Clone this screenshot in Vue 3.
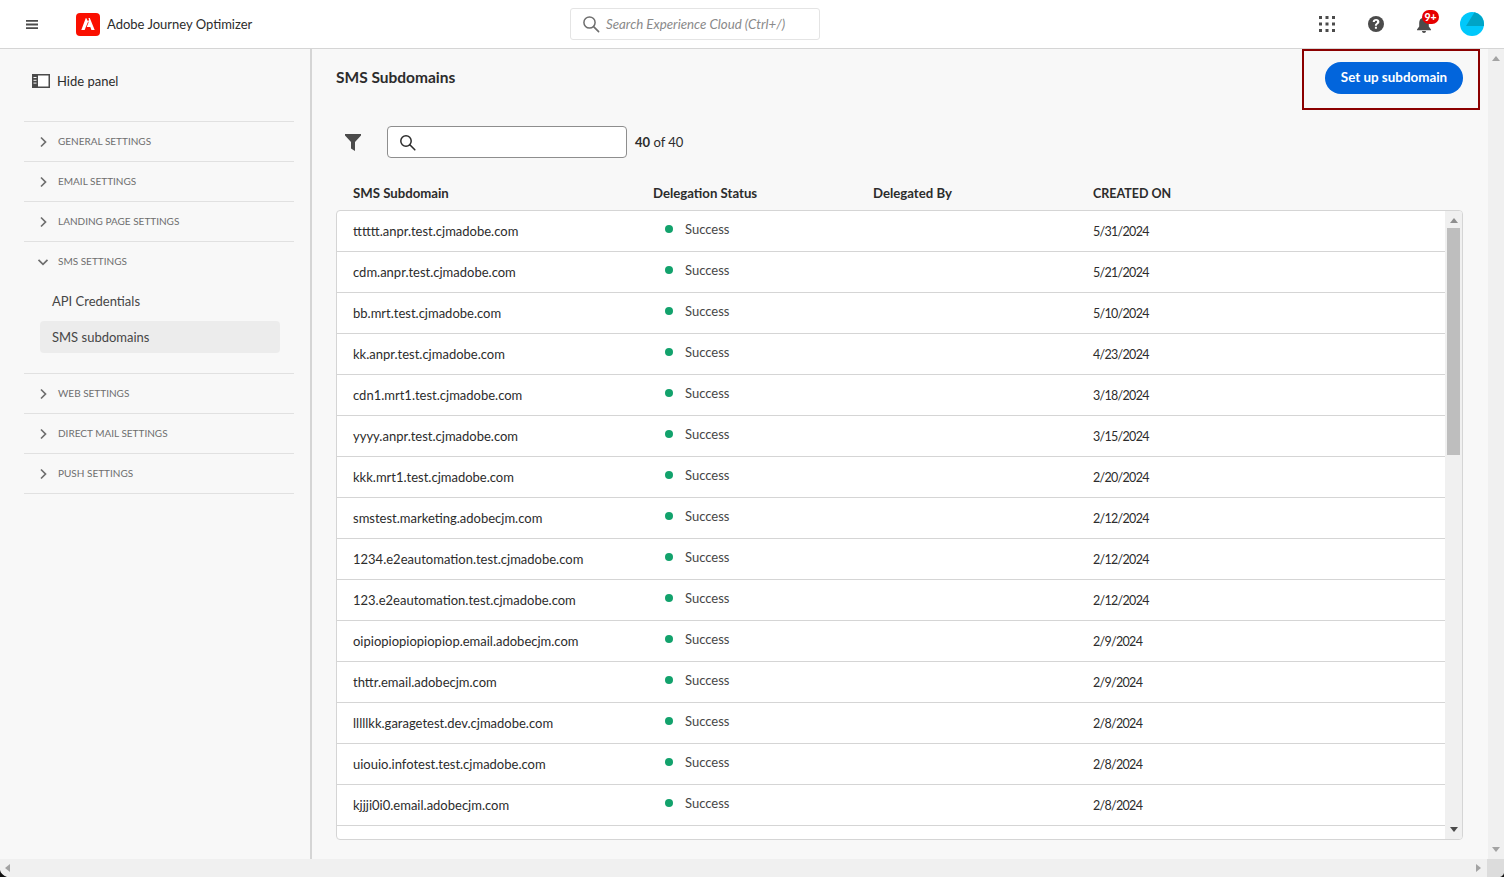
<script setup>
const sections = [
  { name: 'GENERAL SETTINGS' },
  { name: 'EMAIL SETTINGS' },
  { name: 'LANDING PAGE SETTINGS' },
  { name: 'SMS SETTINGS', open: true, items: [{ name: 'API Credentials' }, { name: 'SMS subdomains', active: true }] },
  { name: 'WEB SETTINGS' },
  { name: 'DIRECT MAIL SETTINGS' },
  { name: 'PUSH SETTINGS' },
]
const rows = [
  ['tttttt.anpr.test.cjmadobe.com', '5/31/2024'],
  ['cdm.anpr.test.cjmadobe.com', '5/21/2024'],
  ['bb.mrt.test.cjmadobe.com', '5/10/2024'],
  ['kk.anpr.test.cjmadobe.com', '4/23/2024'],
  ['cdn1.mrt1.test.cjmadobe.com', '3/18/2024'],
  ['yyyy.anpr.test.cjmadobe.com', '3/15/2024'],
  ['kkk.mrt1.test.cjmadobe.com', '2/20/2024'],
  ['smstest.marketing.adobecjm.com', '2/12/2024'],
  ['1234.e2eautomation.test.cjmadobe.com', '2/12/2024'],
  ['123.e2eautomation.test.cjmadobe.com', '2/12/2024'],
  ['oipiopiopiopiopiop.email.adobecjm.com', '2/9/2024'],
  ['thttr.email.adobecjm.com', '2/9/2024'],
  ['lllllkk.garagetest.dev.cjmadobe.com', '2/8/2024'],
  ['uiouio.infotest.test.cjmadobe.com', '2/8/2024'],
  ['kjjji0i0.email.adobecjm.com', '2/8/2024'],
]
</script>

<template>
  <div class="page">
    <header class="topbar">
      <svg class="burger" width="12" height="9" viewBox="0 0 12 9"><path d="M0 0h12v1.8H0zM0 3.6h12v1.8H0zM0 7.2h12V9H0z" fill="#4b4b4b"/></svg>
      <div class="logo">
        <svg width="14" height="12" viewBox="0 0 14 12"><path d="M4.800 0 .3 12h3.300L8 1.500 7.400 0zM5.200 0h3.600L13.700 12h-3.300L9.300 9H5.700l1.900-4.400z" fill="#fff"/></svg>
      </div>
      <span class="brand">Adobe Journey Optimizer</span>
      <div class="globalsearch">
        <svg width="18" height="18" viewBox="0 0 18 18"><circle cx="7.500" cy="7.500" r="5.600" fill="none" stroke="#6e6e6e" stroke-width="1.500"/><path d="m11.600 11.600 5 5" stroke="#6e6e6e" stroke-width="1.600" stroke-linecap="round"/></svg>
        <span>Search Experience Cloud (Ctrl+/)</span>
      </div>
      <div class="topicons">
        <svg width="16" height="16" viewBox="0 0 16 16" fill="#4b4b4b"><rect x="0" y="0" width="3" height="3"/><rect x="6.500" y="0" width="3" height="3"/><rect x="13" y="0" width="3" height="3"/><rect x="0" y="6.500" width="3" height="3"/><rect x="6.500" y="6.500" width="3" height="3"/><rect x="13" y="6.500" width="3" height="3"/><rect x="0" y="13" width="3" height="3"/><rect x="6.500" y="13" width="3" height="3"/><rect x="13" y="13" width="3" height="3"/></svg>
        <svg class="help" width="16" height="16" viewBox="0 0 16 16"><circle cx="8" cy="8" r="8" fill="#4b4b4b"/><path d="M4.700 6C4.800 4 6.100 2.900 8.100 2.900c2 0 3.300 1.100 3.300 2.800 0 1.300-.7 1.900-1.600 2.500-.7.500-.9.800-.9 1.500H6.900c0-1.200.4-1.800 1.200-2.400.7-.5 1-.9 1-1.500 0-.6-.4-1-1-1-.7 0-1.200.4-1.300 1.200z" fill="#fff"/><rect x="6.900" y="10.700" width="2" height="2.100" rx=".4" fill="#fff"/></svg>
        <div class="bellwrap">
          <svg width="14" height="17" viewBox="0 0 14 17"><path d="M7 0c.7 0 1.200.5 1.200 1.200v.6C10.600 2.400 11.800 4.400 11.800 7v3.400L14 13.400v.8H0v-.8l2.200-3V7c0-2.600 1.200-4.600 3.600-5.200v-.6C5.800.5 6.300 0 7 0z" fill="#4b4b4b"/><path d="M5 15h4c0 1.200-.9 2-2 2s-2-.8-2-2z" fill="#4b4b4b"/></svg>
          <span class="badge">9+</span>
        </div>
        <svg class="avatar" width="24" height="24" viewBox="0 0 24 24"><circle cx="12" cy="12" r="12" fill="#00c8fb"/><path d="M14.500.3 6 14h18v-2A12 12 0 0 0 14.500.3z" fill="#00a4c6"/></svg>
      </div>
    </header>

    <div class="middle">
      <aside class="sidebar">
        <div class="hide">
          <svg width="18" height="14" viewBox="0 0 18 14"><rect x=".75" y=".75" width="16.500" height="12.500" fill="#fff" stroke="#4b4b4b" stroke-width="1.500"/><rect x="0" y="0" width="6" height="14" fill="#4b4b4b"/><path d="M1.500 3.500h3M1.500 6.300h3M1.500 9.100h3" stroke="#f8f8f8" stroke-width="1"/></svg>
          <span>Hide panel</span>
        </div>
        <nav class="accordion">
          <div v-for="s in sections" :key="s.name" class="section">
            <div class="sechead">
              <svg v-if="s.open" class="chev" width="12" height="12" viewBox="0 0 12 12"><path d="M1.500 3.800 6 8.300l4.500-4.500" fill="none" stroke="#6e6e6e" stroke-width="1.700"/></svg>
              <svg v-else class="chev" width="12" height="12" viewBox="0 0 12 12"><path d="M4 1.500 8.500 6 4 10.500" fill="none" stroke="#6e6e6e" stroke-width="1.700"/></svg>
              <span>{{ s.name }}</span>
            </div>
            <div v-if="s.open" class="subitems">
              <div v-for="i in s.items" :key="i.name" class="subitem" :class="{ active: i.active }">{{ i.name }}</div>
            </div>
          </div>
        </nav>
      </aside>

      <main class="content">
        <div class="titlebar">
          <h1>SMS Subdomains</h1>
          <button class="cta">Set up subdomain</button>
          <div class="callout"></div>
        </div>
        <div class="filterbar">
          <svg class="funnel" width="16" height="17" viewBox="0 0 16 17"><path d="M0 0h16v1.500L10 8v9l-4-2.500V8L0 1.500z" fill="#4b4b4b"/></svg>
          <div class="searchbox">
            <svg width="17" height="17" viewBox="0 0 17 17"><circle cx="7" cy="7" r="5.200" fill="none" stroke="#2c2c2c" stroke-width="1.500"/><path d="m10.800 10.800 5 5" stroke="#2c2c2c" stroke-width="1.600" stroke-linecap="round"/></svg>
          </div>
          <span class="count"><b>40</b> of 40</span>
        </div>
        <div class="thead">
          <span>SMS Subdomain</span><span>Delegation Status</span><span>Delegated By</span><span class="created">CREATED ON</span>
        </div>
        <div class="table">
          <div v-for="r in rows" :key="r[0]" class="row">
            <span>{{ r[0] }}</span>
            <span class="status"><i class="dot"></i>Success</span>
            <span></span>
            <span class="date">{{ r[1] }}</span>
          </div>
          <div class="vbar inner">
            <svg width="8" height="5" viewBox="0 0 8 5" class="up"><path d="M4 0 8 5H0z" fill="#8e8e8e"/></svg>
            <div class="thumb"></div>
            <svg width="8" height="5" viewBox="0 0 8 5" class="down"><path d="M0 0h8L4 5z" fill="#4b4b4b"/></svg>
          </div>
        </div>
      </main>

      <div class="pagebar">
        <svg width="8" height="5" viewBox="0 0 8 5"><path d="M4 0 8 5H0z" fill="#a3a3a3"/></svg>
        <svg width="8" height="5" viewBox="0 0 8 5"><path d="M0 0h8L4 5z" fill="#a3a3a3"/></svg>
      </div>
    </div>

    <div class="hbar">
      <svg width="5" height="8" viewBox="0 0 5 8"><path d="M5 0v8L0 4z" fill="#a3a3a3"/></svg>
      <svg class="rightarrow" width="5" height="8" viewBox="0 0 5 8"><path d="M0 0v8l5-4z" fill="#a3a3a3"/></svg>
      <div class="corner"></div>
      <svg class="wincorner left" width="7" height="7" viewBox="0 0 7 7"><path d="M0 0C.5 3 3 5.500 7 7H0z" fill="#111"/></svg>
      <svg class="wincorner right" width="4" height="4" viewBox="0 0 4 4"><path d="M4 0C3.500 2 2 3.500 0 4h4z" fill="#111"/></svg>
    </div>
  </div>
</template>

<style>
html, body { margin: 0; overflow: hidden; background: #f8f8f8; }
</style>

<style scoped>
.page { width: 1504px; height: 877px; display: flex; flex-direction: column; overflow: hidden; font-family: "Lato", sans-serif; font-size: 13px; color: #2c2c2c; background: #f8f8f8; }
.topbar { height: 48px; flex: none; display: flex; align-items: center; background: #fff; border-bottom: 1px solid #d5d5d5; position: relative; }
.burger { margin-left: 26px; }
.logo { margin-left: 38px; width: 24px; height: 23px; background: #fa0f00; border-radius: 4px; display: flex; align-items: center; justify-content: center; }
.brand { margin-left: 7px; font-size: 13px; line-height: 16px; margin-bottom: 1px; color: #2c2c2c; }
.globalsearch { position: absolute; left: 570px; top: 8px; box-sizing: border-box; width: 250px; height: 32px; border: 1px solid #e4e4e4; border-radius: 3px; display: flex; align-items: center; gap: 6px; padding: 0 0 1px 11px; font-style: italic; font-size: 13.300px; color: #8a8a8a; background: #fff; }
.topicons { margin-left: auto; display: flex; align-items: center; margin-right: 20px; }
.help { margin-left: 33px; }
.bellwrap { margin-left: 33px; position: relative; width: 14px; height: 17px; }
.badge { position: absolute; left: 5px; top: -6px; width: 17px; height: 14px; border-radius: 8px; background: #e60000; color: #fff; font-size: 10.500px; font-weight: 900; line-height: 14px; text-align: center; }
.avatar { margin-left: 29px; }

.middle { flex: 1; display: flex; min-height: 0; }
.sidebar { flex: none; box-sizing: border-box; border-right: 2px solid #d5d5d5; width: 312px; background: #f8f8f8; padding: 0 16px 0 24px; }
.hide { height: 72px; display: flex; align-items: center; padding: 0 0 9px 8px; gap: 7px; font-size: 13px; box-sizing: border-box; }
.accordion { border-bottom: 1px solid #e1e1e1; }
.section { border-top: 1px solid #e1e1e1; }
.sechead { height: 39px; display: flex; align-items: center; padding: 0 0 1px 13px; box-sizing: border-box; gap: 9px; font-size: 10px; color: #6e6e6e; }
.chev { flex: none; margin-top: 2px; }
.subitems { padding: 0 14px 20px 16px; }
.subitem { height: 32px; margin-top: 4px; display: flex; align-items: center; padding: 0 0 1px 12px; box-sizing: border-box; font-size: 13px; color: #464646; border-radius: 4px; }
.subitem.active { background: #ececec; }

.content { flex: 1; min-width: 0; padding: 0 25px 0 24px; box-sizing: border-box; }
.titlebar { height: 61px; display: flex; align-items: flex-start; justify-content: space-between; position: relative; padding-top: 13px; box-sizing: border-box; }
h1 { margin: 0; font-size: 15.500px; font-weight: 700; color: #2c2c2c; line-height: 30px; }
.cta { width: 138px; height: 32px; border: 0; border-radius: 16px; background: #0265dc; color: #fff; font-family: inherit; font-size: 13.400px; font-weight: 700; padding: 0 0 2px; }
.callout { position: absolute; right: -17px; top: 0; width: 178px; height: 61px; box-sizing: border-box; border: 2px solid #8b0000; }
.filterbar { margin-top: 16px; height: 32px; display: flex; align-items: center; }
.funnel { margin-left: 9px; }
.searchbox { margin-left: 26px; box-sizing: border-box; width: 240px; height: 32px; border: 1px solid #8e8e8e; border-radius: 4px; background: #fff; display: flex; align-items: center; padding-left: 11px; }
.count { margin-left: 8px; font-size: 13px; }
.count b { font-weight: 700; }
.thead { height: 52px; display: grid; grid-template-columns: 300px 220px 220px 1fr; padding: 0 17px 9px; align-items: end; box-sizing: border-box; font-size: 13.200px; font-weight: 700; color: #2c2c2c; }
.created { font-size: 12.500px; }
.table { position: relative; height: 630px; box-sizing: border-box; background: #fff; border: 1px solid #d5d5d5; border-radius: 4px; overflow: hidden; }
.row { height: 41px; box-sizing: border-box; display: grid; grid-template-columns: 300px 220px 220px 1fr; padding: 0 16px 1px; align-items: center; border-bottom: 1px solid #d5d5d5; font-size: 13px; color: #2c2c2c; }
.date { font-size: 12.500px; letter-spacing: -0.7px; margin-top: 2px; }
.status { display: flex; align-items: center; margin-top: -4px; color: #464646; }
.dot { width: 8px; height: 8px; border-radius: 50%; background: #12a26c; margin: 0 12px 0 12px; }
.vbar.inner { position: absolute; right: 0; top: 0; bottom: 0; width: 17px; background: #f0f0f0; display: flex; flex-direction: column; align-items: center; }
.up { margin-top: 7px; flex: none; }
.thumb { width: 13px; height: 227px; background: #bebebe; margin-top: 5px; }
.down { margin-top: auto; margin-bottom: 7px; flex: none; }
.pagebar { width: 16px; flex: none; background: #f0f0f0; display: flex; flex-direction: column; align-items: center; justify-content: space-between; padding: 7px 0 7px; box-sizing: border-box; }
.hbar { height: 18px; flex: none; background: #f0f0f0; display: flex; align-items: center; padding-left: 5px; position: relative; }
.rightarrow { margin-left: auto; margin-right: 23px; }
.corner { position: absolute; right: 0; top: 0; width: 17px; height: 18px; background: #dcdcdc; }
.wincorner { position: absolute; bottom: 0; }
.wincorner.left { left: 0; }
.wincorner.right { right: 0; }
</style>
